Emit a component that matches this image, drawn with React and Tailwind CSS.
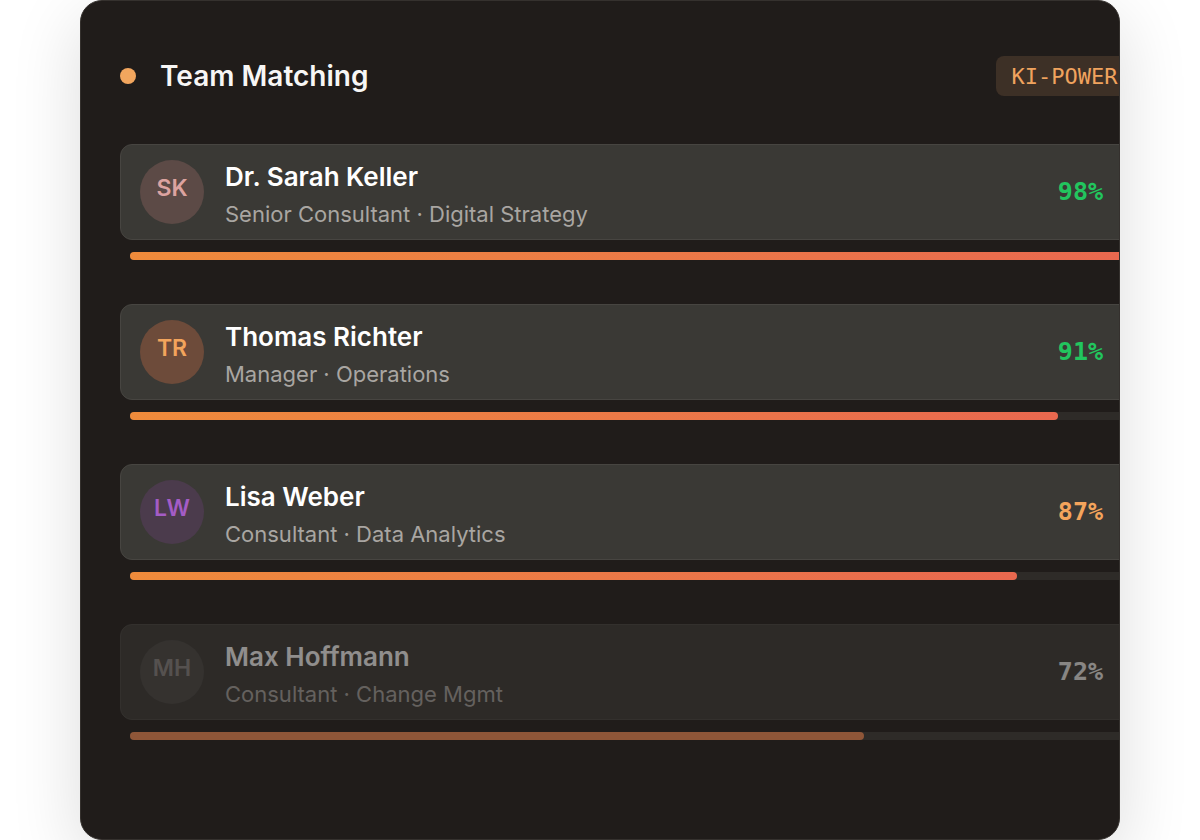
import React from "react";

// Team-Matching Karte mit Kandidatenliste
const candidates = [
  {
    initials: "SK",
    name: "Dr. Sarah Keller",
    role: "Senior Consultant · Digital Strategy",
    score: 98,
    avatar: "bg-[#5c4a46] text-[#dca3a0]",
    scoreColor: "text-[#22c55e]",
  },
  {
    initials: "TR",
    name: "Thomas Richter",
    role: "Manager · Operations",
    score: 91,
    avatar: "bg-[#6d4b3a] text-[#f3a45c]",
    scoreColor: "text-[#22c55e]",
  },
  {
    initials: "LW",
    name: "Lisa Weber",
    role: "Consultant · Data Analytics",
    score: 87,
    avatar: "bg-[#4b3b4c] text-[#a45cc6]",
    scoreColor: "text-[#f3a45c]",
  },
  {
    initials: "MH",
    name: "Max Hoffmann",
    role: "Consultant · Change Mgmt",
    score: 72,
    avatar: "bg-[#4a4845] text-[#8a8784]",
    scoreColor: "text-[#f0efee]",
    dim: true,
  },
];

const mono = { fontFamily: "'DejaVu Sans Mono', 'Liberation Mono', monospace" };

function Candidate({ c }) {
  return (
    <div>
      <div
        className={`flex items-center h-[96px] pl-[19px] pr-[56px] rounded-xl border border-[#474541] bg-[#3a3935] ${
          c.dim ? "opacity-50" : ""
        }`}
      >
        <div
          className={`w-16 h-16 shrink-0 rounded-full flex items-center justify-center pb-2 text-[23px] font-semibold ${c.avatar}`}
        >
          {c.initials}
        </div>
        <div className="ml-[21px] pt-1 flex-1">
          <div className="text-[26px] leading-8 font-semibold text-white">{c.name}</div>
          <div className="mt-[7px] text-[22px] leading-7 text-[#a9a6a2]">{c.role}</div>
        </div>
        <div className={`text-[25px] font-bold ${c.scoreColor}`} style={mono}>
          {c.score}%
        </div>
      </div>
      <div className="mx-[10px] mt-3 h-2 rounded-full bg-[#2e2b28]">
        <div
          className={`h-2 rounded-full ${
            c.dim ? "bg-[#8f5638]" : "bg-gradient-to-r from-[#ef8b3b] to-[#e9684f]"
          }`}
          style={{ width: `${c.score}%` }}
        />
      </div>
    </div>
  );
}

export default function App() {
  return (
    <div
      className="w-[1200px] h-[840px] bg-white pl-[80px] overflow-hidden"
      style={{ fontFamily: "Inter, 'Noto Sans', sans-serif" }}
    >
      <div className="w-[1040px] h-[840px] rounded-[22px] border border-[#35312e] bg-[#201c1a] shadow-[0_20px_70px_rgba(0,0,0,0.14)] overflow-hidden pl-[39px] pt-[55px]">
        <div className="w-[1040px]">
          {/* Kopfzeile */}
          <div className="flex items-center h-10">
            <span className="w-4 h-4 rounded-full bg-[#f2a65e]" />
            <h2 className="ml-[24px] text-[28px] font-semibold text-[#f7f6f5] flex-1">
              Team Matching
            </h2>
            <span
              className="h-10 px-4 flex items-center rounded-lg bg-[#3d3026] text-[#f0a35e] text-[22px]"
              style={mono}
            >
              KI-POWERED
            </span>
          </div>

          <div className="mt-12 flex flex-col gap-[44px]">
            {candidates.map((c) => (
              <Candidate key={c.initials} c={c} />
            ))}
          </div>
        </div>
      </div>
    </div>
  );
}
